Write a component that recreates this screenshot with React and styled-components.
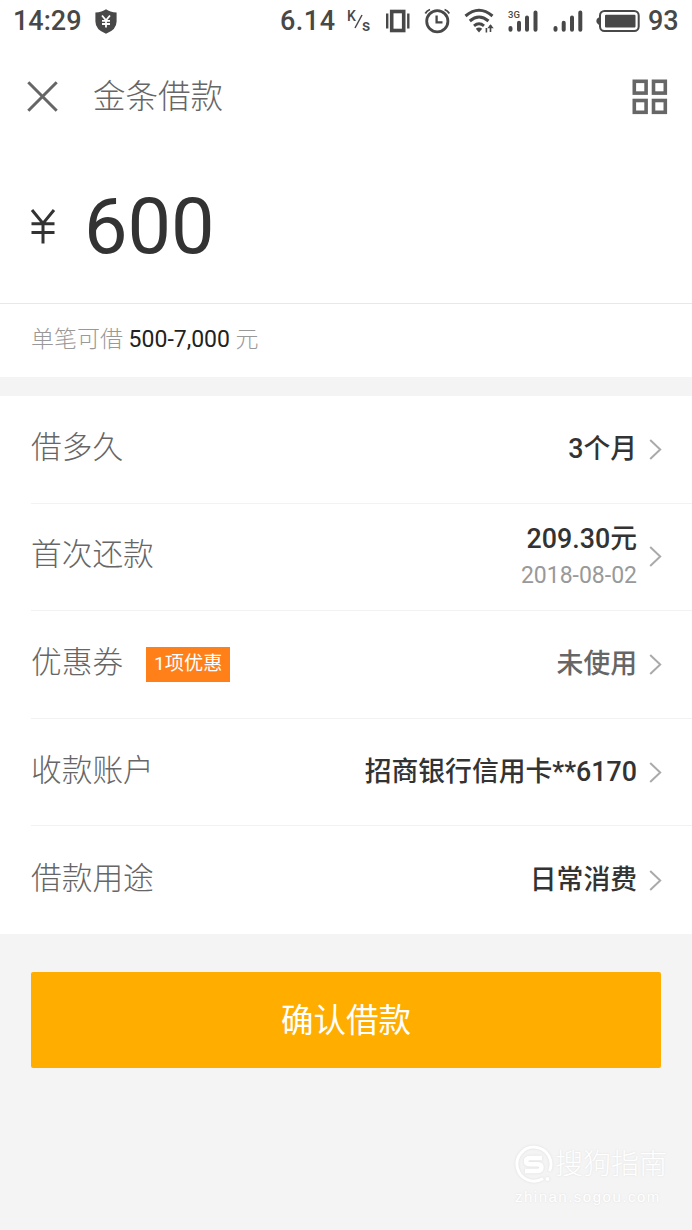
import React from 'react';
import styled, { createGlobalStyle } from 'styled-components';

const GlobalStyle = createGlobalStyle`
    * {
        box-sizing: border-box;
    }

    body {
        margin: 0;
        background: #f4f4f4;
        font-family: Roboto, 'Noto Sans CJK SC', sans-serif;
    }
`;

const Page = styled.div`
    position: relative;
    width: 692px;
    height: 1230px;
    overflow: hidden;
    background: #f4f4f4;
`;

const StatusBar = styled.div`
    display: flex;
    align-items: center;
    height: 43px;
    padding: 0 13px;
    background: #fff;
    color: #484848;
    font-size: 27px;
    font-weight: 500;
    line-height: 43px;

    svg {
        display: block;
        flex: none;
    }
`;

const Clock = styled.span`
    width: 82px;
`;

const Speed = styled.span`
    width: 60px;
    margin-left: auto;
    letter-spacing: 0.5px;
`;

const Battery = styled.span`
    width: 31px;
    margin-left: 7px;
`;

const Header = styled.div`
    display: flex;
    align-items: center;
    height: 107px;
    padding: 0 24px 0 27px;
    background: #fff;

    h1 {
        flex: 1;
        margin: 0 0 0 35px;
        color: #666;
        font-size: 32.5px;
        font-weight: 300;
        line-height: 48px;
    }
`;

const Amount = styled.div`
    display: flex;
    align-items: center;
    height: 154px;
    padding-left: 30px;
    background: #fff;
    border-bottom: 1px solid #e8e8e8;
    color: #333;

    svg {
        flex: none;
    }

    strong {
        margin-left: 28px;
        font-size: 77.5px;
        font-weight: 400;
        line-height: 90px;
    }
`;

const Limit = styled.div`
    height: 73px;
    margin-bottom: 19px;
    padding-left: 31px;
    background: #fff;
    color: #999;
    font-size: 23px;
    font-weight: 300;
    line-height: 72px;
    white-space: pre;

    b {
        color: #222;
        font-weight: 400;
    }
`;

const List = styled.div`
    height: 538px;
    padding-left: 31px;
    background: #fff;
    display: grid;
    grid-template-rows: repeat(5, 1fr);
`;

const Row = styled.div`
    display: flex;
    align-items: center;
    padding-right: 30px;
    border-bottom: 1px solid #f2f2f2;

    &:last-child {
        border-bottom: 0;
    }

    svg {
        flex: none;
        margin-left: 12px;
    }
`;

const Label = styled.div`
    padding-bottom: 3px;
    color: #666;
    font-size: 30.7px;
    font-weight: 300;
    line-height: 44px;
`;

const Badge = styled.div`
    height: 35px;
    margin-left: 23px;
    padding: 0 8px;
    background: #ff8019;
    color: #fff;
    font-size: 19.2px;
    line-height: 33px;
`;

const Value = styled.div`
    margin-left: auto;
    color: ${(props) => (props.$muted ? '#666' : '#333')};
    font-size: 26.8px;
    font-weight: 500;
    line-height: 37px;
    text-align: right;

    small {
        display: block;
        color: #999;
        font-size: 23px;
        font-weight: 400;
        line-height: 35px;
    }
`;

const Submit = styled.button`
    display: block;
    width: 630px;
    height: 96px;
    margin: 38px 0 0 31px;
    padding: 0 0 5px;
    border: 0;
    border-radius: 2px;
    background: #ffae00;
    color: #fff;
    font-family: inherit;
    font-size: 32.5px;
    font-weight: 400;
`;

const Watermark = styled.div`
    position: absolute;
    right: 23px;
    bottom: 22px;
    width: 154px;
    color: #fff;
    text-shadow: 0 0 2px #ddd;

    div {
        display: flex;
        align-items: center;
        height: 42px;
        font-size: 28px;
        font-weight: 300;
        line-height: 42px;
        white-space: nowrap;
    }

    svg {
        flex: none;
        margin-right: 2px;
        filter: drop-shadow(0 0 1px #ddd);
    }

    p {
        margin: 0;
        font-family: 'Liberation Sans', sans-serif;
        font-size: 15px;
        letter-spacing: 1.5px;
        line-height: 22px;
        white-space: nowrap;
    }
`;

const Arrow = () => (
    <svg width='13' height='21' viewBox='0 0 13 21' fill='none' stroke='#aaa' strokeWidth='2'>
        <path d='M1.2 1L11.2 10.5L1.2 20' />
    </svg>
);

const rows = [
    { label: '借多久', value: '3个月' },
    { label: '首次还款', value: '209.30元', date: '2018-08-02' },
    { label: '优惠券', value: '未使用', badge: '1项优惠', muted: true },
    { label: '收款账户', value: '招商银行信用卡**6170' },
    { label: '借款用途', value: '日常消费' },
];

const StatusIcons = () => (
    <svg width='301' height='43' viewBox='341 0 301 43' fill='none' stroke='#484848'>
        {/* K/s */}
        <text x='348' y='21' fontSize='14' fontWeight='500' fill='#484848' stroke='none'>K</text>
        <path d='M356 28L363 15' strokeWidth='1.5' />
        <text x='363' y='31' fontSize='16' fontWeight='500' fill='#484848' stroke='none'>s</text>
        {/* vibrate */}
        <rect x='392.7' y='11.5' width='12' height='19' strokeWidth='3.6' />
        <path d='M388.2 13.5V28.5M409.3 13.5V28.5' strokeWidth='2.4' />
        {/* alarm */}
        <circle cx='438.3' cy='21.2' r='10.6' strokeWidth='2.8' />
        <path d='M437.6 15.5V22.3H443.5' strokeWidth='2.3' />
        <path d='M426.3 13.5Q427.8 10.7 431 9.5M450.3 13.5Q448.8 10.7 445.6 9.5' strokeWidth='1.8' />
        {/* wifi */}
        <path d='M466.5 16Q480 4.5 493.5 16' strokeWidth='3' />
        <path d='M470.8 21Q480 13 489.5 21' strokeWidth='3' />
        <path d='M475 25.8Q480 21.8 485 25.8' strokeWidth='3' />
        <path d='M476.8 28.8Q480 26.4 483.2 28.8L480 32.5Z' fill='#484848' stroke='none' />
        <path d='M487.4 32.5V28M491.5 25V32' strokeWidth='1.6' />
        <path d='M488.3 28.2L491.5 24.2L494.7 28.2Z' fill='#484848' stroke='none' />
        {/* signals */}
        <text x='509' y='17.5' fontSize='9.5' fontWeight='500' fill='#484848' stroke='none'>3G</text>
        <path d='M511.5 28V29.7M520 22.7V29.7M528 17.5V29.7M536.5 12.5V29.7' strokeWidth='4' strokeLinecap='round' />
        <path d='M556.5 28V29.7M564.7 22.7V29.7M573 17.5V29.7M581.3 12.5V29.7' strokeWidth='4' strokeLinecap='round' />
        {/* battery */}
        <rect x='601' y='11' width='38.7' height='20' rx='4.5' strokeWidth='2' />
        <rect x='606' y='14.8' width='30.5' height='12.8' rx='1' fill='#484848' stroke='none' />
        <path d='M600 17.3Q597.3 18.5 597.3 21Q597.3 23.7 600 25Z' fill='#484848' stroke='none' />
    </svg>
);

const App = () => {
    return (
        <Page>
            <GlobalStyle />
            <StatusBar>
                <Clock>14:29</Clock>
                <svg width='22' height='25' viewBox='0 0 22 25'>
                    <path d='M11 0.3Q15 3.3 21.6 3.6V12.5Q21.6 20.8 11 24.7Q0.4 20.8 0.4 12.5V3.6Q7 3.3 11 0.3Z' fill='#484848' />
                    <path d='M7 6.5L11 11.3L15 6.5M11 11V18.5M7 11.8H15M7 15H15' fill='none' stroke='#fff' strokeWidth='1.8' />
                </svg>
                <Speed>6.14</Speed>
                <StatusIcons />
                <Battery>93</Battery>
            </StatusBar>
            <Header>
                <svg width='31' height='31' viewBox='0 0 31 31' stroke='#666' strokeWidth='3'>
                    <path d='M1.3 1.3L29.7 29.7M29.7 1.3L1.3 29.7' />
                </svg>
                <h1>金条借款</h1>
                <svg width='36' height='36' viewBox='0 0 36 36' fill='none' stroke='#666' strokeWidth='3.6'>
                    <rect x='2.3' y='2.3' width='11.8' height='11.8' />
                    <rect x='21.5' y='2.3' width='11.8' height='11.8' />
                    <rect x='2.3' y='21.5' width='11.8' height='11.8' />
                    <rect x='21.5' y='21.5' width='11.8' height='11.8' />
                </svg>
            </Header>
            <Amount>
                <svg width='26' height='35' viewBox='0 0 26 35' fill='none' stroke='#333' strokeWidth='3'>
                    <path d='M2 1L13 14.5L24 1M13 13.5V34.5M1.5 14.8H24.5M1.5 23.5H24.5' />
                </svg>
                <strong>600</strong>
            </Amount>
            <Limit>单笔可借 <b>500-7,000</b> 元</Limit>
            <List>
                {rows.map((row) => (
                    <Row key={row.label}>
                        <Label>{row.label}</Label>
                        {row.badge && <Badge>{row.badge}</Badge>}
                        <Value $muted={row.muted}>
                            {row.value}
                            {row.date && <small>{row.date}</small>}
                        </Value>
                        <Arrow />
                    </Row>
                ))}
            </List>
            <Submit>确认借款</Submit>
            <Watermark>
                <div>
                    <svg width='38' height='40' viewBox='0 0 38 40' fill='none' stroke='#fff'>
                        <path d='M28 33.5A17 17 0 1 1 34.5 26' strokeWidth='3' />
                        <path d='M27 13H15.5Q11 13 11 16.3Q11 19.3 15.5 19.3H22Q26.5 19.3 26.5 22.5Q26.5 26 22 26H10' strokeWidth='4.5' />
                        <circle cx='32.5' cy='34' r='2' fill='#fff' stroke='none' />
                    </svg>
                    搜狗指南
                </div>
                <p>zhinan.sogou.com</p>
            </Watermark>
        </Page>
    );
};

export default App;
